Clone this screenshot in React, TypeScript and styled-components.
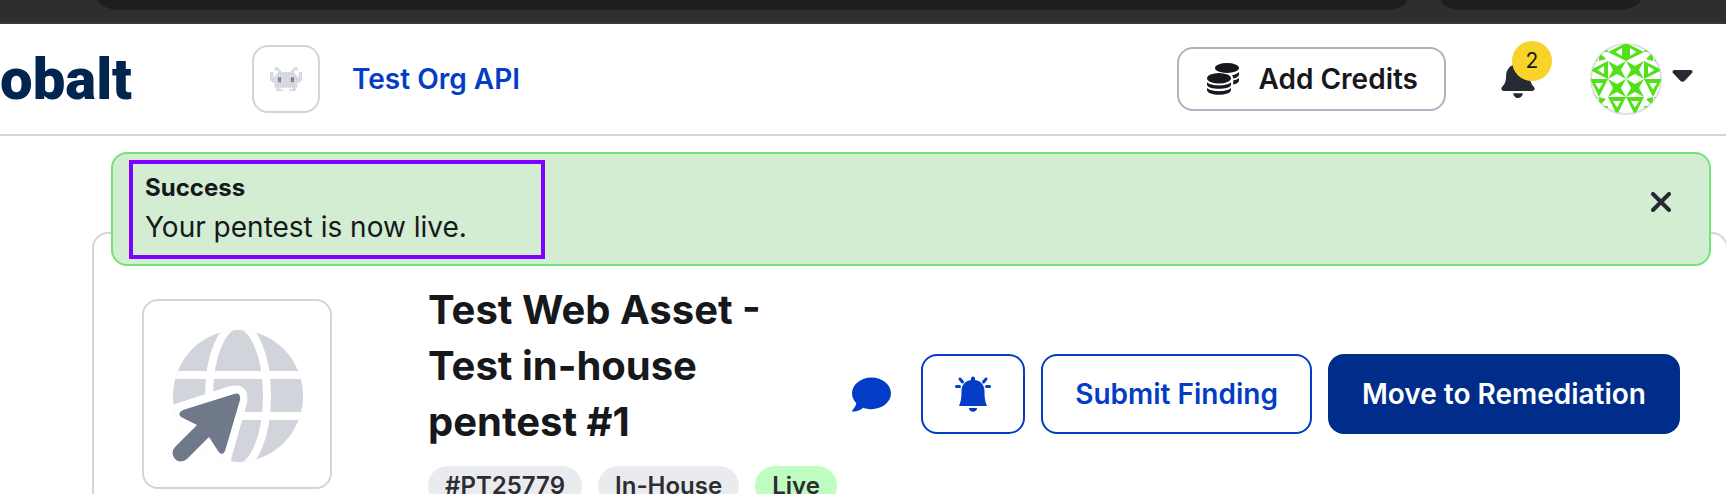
import React from "react";
import styled, { createGlobalStyle } from "styled-components";
import { FaBell, FaComment } from "react-icons/fa";

const color = {
  ink: "#17181c",
  icon: "#272a33",
  line: "#d1d5db",
  blue: "#033cc6",
  navy: "#002d8a",
};

const GlobalStyle = createGlobalStyle`
  *, *::before, *::after { box-sizing: border-box; }
  body {
    margin: 0;
    background: #fff;
    color: ${color.ink};
    font-family: Inter, "Liberation Sans", sans-serif;
    overflow: hidden;
  }
  button { font: inherit; color: inherit; margin: 0; padding: 0; background: none; border: 0; cursor: pointer; }
  h1, h2, p { margin: 0; }
  svg { display: block; flex: none; }
`;

/* Browser chrome */
const Chrome = styled.div`
  display: flex;
  gap: 34px;
  height: 24px;
  padding: 0 86px 0 98px;
  background: #2e2e2e;
  border-bottom: 2px solid #383838;
`;
const ChromeField = styled.div<{ $width?: number }>`
  flex: ${(p) => (p.$width ? `0 0 ${p.$width}px` : "1")};
  height: 10px;
  background: #1e1e1e;
  border-radius: 0 0 24px 24px / 0 0 10px 10px;
`;

/* Top bar */
const Header = styled.header`
  display: flex;
  align-items: center;
  height: 112px;
  padding-right: 33px;
  border-bottom: 2px solid ${color.line};
`;
const Logo = styled.a`
  width: 252px;
  flex: none;
  margin-left: -38px;
  margin-right: 38px;
  color: #00254f;
  font: 900 58px/72px Roboto, sans-serif;
  text-decoration: none;
`;
const OrgTile = styled.div`
  display: grid;
  place-items: center;
  width: 68px;
  height: 68px;
  flex: none;
  border: 2px solid ${color.line};
  border-radius: 16px;
`;
const OrgLink = styled.a`
  margin-left: 32px;
  color: ${color.blue};
  font-size: 28px;
  font-weight: 600;
  line-height: 40px;
  text-decoration: none;
  white-space: nowrap;
`;
const HeaderActions = styled.div`
  display: flex;
  align-items: center;
  margin-left: auto;
`;
const CreditsButton = styled.button`
  display: flex;
  align-items: center;
  gap: 20px;
  height: 64px;
  padding: 0 26px 0 28px;
  border: 2px solid #aeb3c2;
  border-radius: 16px;
  font-size: 28px;
  font-weight: 600;
  white-space: nowrap;
`;
const Notifications = styled.button`
  position: relative;
  margin-left: 53px;
  color: ${color.icon};
`;
const Badge = styled.span`
  position: absolute;
  left: 13px;
  bottom: 17px;
  width: 40px;
  height: 40px;
  border-radius: 50%;
  background: #f8d42a;
  color: ${color.ink};
  font-size: 21px;
  line-height: 40px;
  text-align: center;
`;
const Profile = styled.button`
  display: flex;
  align-items: center;
  gap: 10px;
  margin-left: 53px;
  color: ${color.icon};
`;

/* Page body */
const Page = styled.main`
  padding-top: 16px;
`;
const Alert = styled.section`
  position: relative;
  z-index: 1;
  display: flex;
  align-items: flex-start;
  justify-content: space-between;
  margin: 0 15px 0 111px;
  padding: 6px 38px 5px 16px;
  background: #d3edd3;
  border: 2px solid #72e374;
  border-radius: 16px;
`;
const AlertMessage = styled.div`
  width: 416px;
  padding: 8px 12px 5px;
  border: 4px solid #7f00ff;
`;
const AlertTitle = styled.h2`
  font-size: 24px;
  font-weight: 700;
  line-height: 32px;
`;
const AlertText = styled.p`
  font-size: 28px;
  line-height: 46px;
`;
const CloseButton = styled.button`
  margin-top: 32px;
  color: ${color.icon};
`;
const Card = styled.section`
  display: flex;
  align-items: flex-start;
  margin: -34px -2px 0 92px;
  padding: 52px 46px 48px 48px;
  border: 2px solid ${color.line};
  border-radius: 16px;
`;
const AssetTile = styled.div`
  display: grid;
  place-items: center;
  width: 190px;
  height: 190px;
  flex: none;
  margin-top: 13px;
  border: 2px solid ${color.line};
  border-radius: 16px;
`;
const Summary = styled.div`
  flex: 1;
  min-width: 0;
  margin-left: 96px;
`;
const Title = styled.h1`
  max-width: 400px;
  margin-top: -4px;
  font-size: 40px;
  font-weight: 700;
  line-height: 56px;
`;
const Chips = styled.div`
  display: flex;
  gap: 16px;
  margin-top: 16px;
`;
const Chip = styled.span<{ $live?: boolean }>`
  padding: 0 17px;
  border-radius: 20px;
  background: ${(p) => (p.$live ? "#befcc0" : "#eaebef")};
  color: #2b2d33;
  font-size: 24px;
  font-weight: 600;
  line-height: 40px;
  white-space: nowrap;
`;
const Actions = styled.div`
  display: flex;
  align-items: center;
  gap: 16px;
  margin-top: 68px;
`;
const CommentButton = styled.button`
  margin-right: 14px;
  color: ${color.blue};
`;
const ActionButton = styled.button<{ $primary?: boolean }>`
  height: 80px;
  padding: 0 32px;
  border: 2px solid ${(p) => (p.$primary ? color.navy : color.blue)};
  border-radius: 16px;
  background: ${(p) => (p.$primary ? color.navy : "#fff")};
  color: ${(p) => (p.$primary ? "#fff" : color.blue)};
  font-size: 28px;
  font-weight: 600;
  white-space: nowrap;
`;

/* Left half of each pixel row; the right half is its mirror image. */
const invaderRows = [
  "...##.....",
  "...###....",
  ".....##...",
  "##...#####",
  "##..######",
  "##.#######",
  "#####oo###",
  "#####oo###",
  ".####oo###",
  "...#######",
  "...#######",
  "...#######",
  "....##....",
  "....####..",
];

const Invader = () => (
  <svg width="32" height="24" viewBox="0 0 20 14" preserveAspectRatio="none" aria-hidden="true">
    {invaderRows.flatMap((half, y) =>
      [...half, ...[...half].reverse()].map((c, x) =>
        c === "." ? null : (
          <rect
            key={`${x}-${y}`}
            x={x}
            y={y}
            width="1.050"
            height="1.050"
            fill={c === "o" ? "#6f7887" : color.line}
          />
        ),
      ),
    )}
  </svg>
);

const Coins = () => (
  <svg width="32" height="32" viewBox="0 0 32 32" fill="currentColor" aria-hidden="true">
    <ellipse cx="20" cy="5" rx="12" ry="5" />
    <path d="M25 12.200C28 11.600 30.600 10.600 32 9V11.500C32 13.500 29.500 14.800 26.200 15.600C26.200 14.300 25.800 13.200 25 12.200Z" />
    <path d="M26.200 17.600C28.800 17 30.900 16.200 32 15V17.500C32 19.500 29.500 20.800 26.200 21.600Z" />
    <ellipse cx="12" cy="15.300" rx="12" ry="5.200" />
    <path d="M0 19.300C4.500 23.500 19.500 23.500 24 19.300V21.500C24 27.300 0 27.300 0 21.500Z" />
    <path d="M0 25C4.500 29.200 19.500 29.200 24 25V27C24 33.300 0 33.300 0 27Z" />
  </svg>
);

const Caret = () => (
  <svg width="21" height="20" viewBox="0 0 21 20" fill="currentColor" aria-hidden="true">
    <path d="M2 1H19Q21.500 2 20 4L13 11.500Q10.500 14 8 11.500L1 4Q-0.500 2 2 1Z" />
  </svg>
);

const star = "M0 0L9 5L18 0L13 9L18 18L9 13L0 18L5 9Z";
const kite = "M0 0H18L9 18ZM5 4L9 10.500L13 4Z";
const corner = "M9 9H18L15 0ZM9 9V18L16 16ZM3 11L8 18H0Z";

const Avatar = () => (
  <svg width="72" height="72" viewBox="0 0 72 72" role="img" aria-label="Profile">
    <defs>
      <clipPath id="disc">
        <circle cx="36" cy="36" r="35" />
      </clipPath>
    </defs>
    <circle cx="36" cy="36" r="35" fill="#fff" stroke="#dedfe3" strokeWidth="2" />
    <g fill="#52e01a" fillRule="evenodd" clipPath="url(#disc)">
      {[18, 36].map((x) => [18, 36].map((y) => <path key={`${x}${y}`} d={star} transform={`translate(${x} ${y})`} />))}
      {[[0, 36], [54, 36], [18, 54], [36, 54]].map(([x, y]) => (
        <path key={`${x}${y}`} d={kite} transform={`translate(${x} ${y})`} />
      ))}
      <path d={kite} transform="translate(36 0) rotate(90)" />
      <path d={kite} transform="translate(36 18) rotate(-90)" />
      <path d={kite} transform="translate(18 18) rotate(90)" />
      <path d={kite} transform="translate(54 36) rotate(-90)" />
      <path d={corner} />
      <path d={corner} transform="translate(72 0) scale(-1 1)" />
      <path d={corner} transform="translate(0 72) scale(1 -1)" />
      <path d={corner} transform="translate(72 72) scale(-1 -1)" />
    </g>
  </svg>
);

const Close = () => (
  <svg width="20" height="20" viewBox="0 0 20 20" fill="none" stroke="currentColor" strokeWidth="4" strokeLinecap="round" aria-hidden="true">
    <path d="M2 2L18 18M18 2L2 18" />
  </svg>
);

const GlobeCursor = () => (
  <svg width="132" height="138" viewBox="-1 -4 132 138" aria-hidden="true">
    <defs>
      <clipPath id="globe">
        <ellipse cx="66" cy="67" rx="65" ry="66" />
      </clipPath>
    </defs>
    <g clipPath="url(#globe)">
      <rect width="132" height="134" fill={color.line} />
      <g fill="none" stroke="#fff" strokeWidth="8">
        <path d="M0 46H132M0 87H132" />
        <ellipse cx="66" cy="67" rx="29" ry="71" />
      </g>
      <path d="M-6 78L58 57Q78 54 75 74L58 134H-6Z" fill="#fff" />
    </g>
    <path
      d="M11 81L62 65Q69 63 68 71L53 122Q50 128 46 122L37 108L15 130Q8 135 3 130Q-2 124 3 118L25 96L9 88Q5 84 11 81Z"
      fill="#707989"
    />
  </svg>
);

const RingingBell = () => (
  <svg width="36" height="36" viewBox="0 0 36 36" fill="currentColor" aria-hidden="true">
    <path d="M16 2.500a2 2 0 0 1 4 0V4c6 1 9.500 5 9.500 11 0 7 .5 10 2.500 15H4c2-5 2.500-8 2.500-15C6.500 9 10 5 16 4Z" />
    <path d="M14 32h8c0 5-8 5-8 0Z" />
    <path d="M1.500 10.500h3M31.500 10.500h3M5 3l2.500 3M31 3l-2.500 3" stroke="currentColor" strokeWidth="3" strokeLinecap="round" />
  </svg>
);

export default function App() {
  return (
    <>
      <GlobalStyle />
      <Chrome aria-hidden="true">
        <ChromeField />
        <ChromeField $width={199} />
      </Chrome>
      <Header>
        <Logo href="#">Cobalt</Logo>
        <OrgTile>
          <Invader />
        </OrgTile>
        <OrgLink href="#">Test Org API</OrgLink>
        <HeaderActions>
          <CreditsButton type="button">
            <Coins />
            Add Credits
          </CreditsButton>
          <Notifications type="button" aria-label="Notifications">
            <FaBell size={38} aria-hidden="true" />
            <Badge>2</Badge>
          </Notifications>
          <Profile type="button" aria-label="Profile menu">
            <Avatar />
            <Caret />
          </Profile>
        </HeaderActions>
      </Header>
      <Page>
        <Alert role="status">
          <AlertMessage>
            <AlertTitle>Success</AlertTitle>
            <AlertText>Your pentest is now live.</AlertText>
          </AlertMessage>
          <CloseButton type="button" aria-label="Dismiss">
            <Close />
          </CloseButton>
        </Alert>
        <Card>
          <AssetTile>
            <GlobeCursor />
          </AssetTile>
          <Summary>
            <Title>Test Web Asset - Test in-house pentest #1</Title>
            <Chips>
              <Chip>#PT25779</Chip>
              <Chip>In-House</Chip>
              <Chip $live>Live</Chip>
            </Chips>
          </Summary>
          <Actions>
            <CommentButton type="button" aria-label="Comments">
              <FaComment size={39} aria-hidden="true" />
            </CommentButton>
            <ActionButton type="button" aria-label="Alerts">
              <RingingBell />
            </ActionButton>
            <ActionButton type="button">Submit Finding</ActionButton>
            <ActionButton type="button" $primary>
              Move to Remediation
            </ActionButton>
          </Actions>
        </Card>
      </Page>
    </>
  );
}
